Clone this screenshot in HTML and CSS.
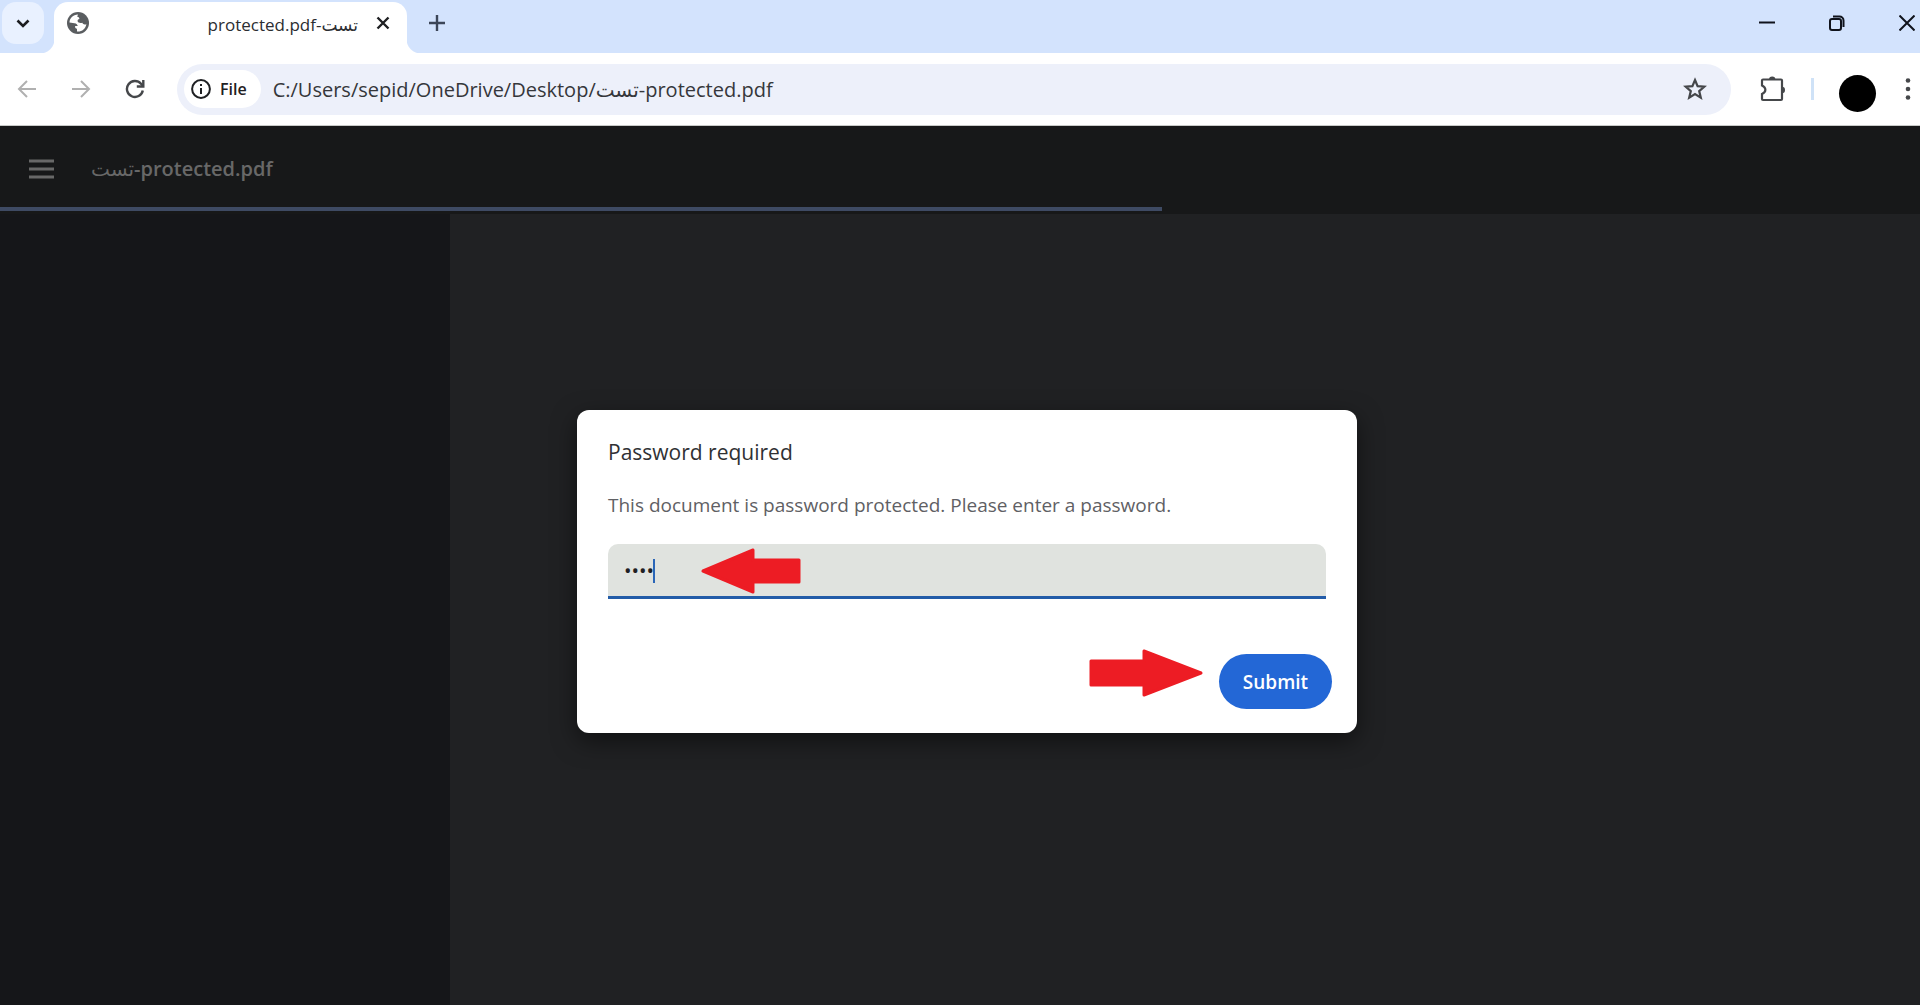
FILE: index.html
```html
<!DOCTYPE html>
<html lang="en">

<head>
  <meta charset="UTF-8">
  <meta name="viewport" content="width=device-width, initial-scale=1.0">
  <title>تست-protected.pdf</title>
  <link rel="stylesheet" href="styles.css">
</head>

<body>
  <!-- tab strip -->
  <div class="tabstrip">
    <button class="tab-search" aria-label="Search tabs">
      <svg width="16" height="16" viewBox="0 0 16 16"><path d="M2.500 5.500L8 11l5.500-5.500" fill="none" stroke="currentColor" stroke-width="2.600"/></svg>
    </button>
    <div class="tab">
      <svg class="globe" width="22" height="22" viewBox="0 0 22 22"><circle cx="11" cy="11" r="11" fill="currentColor"/><path d="M11 2.500C6 2.500 2.500 6.500 2.500 10.500l5 .8c2 .3 3 1.200 3.200 2.700H8.200c-.5 1.500.2 2.500 1.800 2.700v2.800c5 .4 8.500-2.800 9.400-7.300-1.900.6-3.400.3-4.100-1.400-1.800.5-4 .3-4.600-1.200-.5-1.500.5-2.300 1.700-2.500 0-1.500-.6-2.200-2.200-2.400z" fill="#fff"/></svg>
      <span class="tab-title" dir="rtl">تست-protected.pdf</span>
      <button class="tab-close" aria-label="Close tab">
        <svg width="14" height="14" viewBox="0 0 14 14"><path d="M1.500 1.500l11 11M12.500 1.500l-11 11" stroke="currentColor" stroke-width="2.400"/></svg>
      </button>
    </div>
    <button class="new-tab" aria-label="New tab">
      <svg width="16" height="16" viewBox="0 0 16 16"><path d="M8 0v16M0 8h16" stroke="currentColor" stroke-width="2.400"/></svg>
    </button>
    <div class="window-buttons">
      <button aria-label="Minimize"><svg width="16" height="16" viewBox="0 0 16 16"><path d="M0 7.500h16" stroke="currentColor" stroke-width="2"/></svg></button>
      <button aria-label="Restore"><svg width="16" height="16" viewBox="0 0 16 16" fill="none" stroke="currentColor" stroke-width="2"><rect x="1" y="4" width="11" height="11" rx="2"/><path d="M4 1.500h6.500a4 4 0 0 1 4 4V12"/></svg></button>
      <button aria-label="Close"><svg width="16" height="16" viewBox="0 0 16 16"><path d="M.5.5l15 15M15.500.5l-15 15" stroke="currentColor" stroke-width="2"/></svg></button>
    </div>
  </div>

  <!-- address bar -->
  <div class="toolbar">
    <div class="nav">
      <button disabled aria-label="Back"><svg width="20" height="20" viewBox="0 0 20 20" fill="none" stroke="currentColor" stroke-width="2"><path d="M19 10H2M10 2l-8 8 8 8"/></svg></button>
      <button disabled aria-label="Forward"><svg width="20" height="20" viewBox="0 0 20 20" fill="none" stroke="currentColor" stroke-width="2"><path d="M1 10h17M10 2l8 8-8 8"/></svg></button>
      <button aria-label="Reload"><svg width="20" height="20" viewBox="0 0 20 20" fill="none" stroke="currentColor" stroke-width="2.400"><path d="M17.800 11.500A8 8 0 1 1 16 4.700L18 7"/><path d="M18.300 1v6.500h-6.500"/></svg></button>
    </div>
    <div class="address">
      <button class="chip">
        <svg width="20" height="20" viewBox="0 0 20 20"><circle cx="10" cy="10" r="8.900" fill="none" stroke="currentColor" stroke-width="2"/><path d="M10 9v6M10 5v2" stroke="currentColor" stroke-width="2"/></svg>
        File
      </button>
      <input class="url" type="text" aria-label="Address" value="C:/Users/sepid/OneDrive/Desktop/تست-protected.pdf">
      <button class="star" aria-label="Bookmark"><svg width="24" height="24" viewBox="0 0 24 24"><path d="M12 3l2.600 6.200 6.700.5-5.100 4.400 1.600 6.600L12 17.100l-5.800 3.600 1.600-6.600-5.100-4.400 6.700-.5z" fill="none" stroke="currentColor" stroke-width="2.200"/></svg></button>
    </div>
    <button class="extensions" aria-label="Extensions"><svg width="26" height="26" viewBox="0 0 26 26"><path d="M3 3.500h18q1 0 1 1v18.500q0 1-1 1H3q-1 0-1-1v-5c4.500-2 4.500-6.500 0-8.500v-5q0-1 1-1z" fill="none" stroke="currentColor" stroke-width="2.200"/><path d="M9 3.500a3.200 3 0 0 1 6.400 0zM22 10.700a3 3.200 0 0 1 0 6.400z" fill="currentColor"/></svg></button>
    <span class="divider"></span>
    <button class="avatar" aria-label="Profile"></button>
    <button class="menu" aria-label="Menu"><svg width="6" height="24" viewBox="0 0 6 24" fill="currentColor"><circle cx="3" cy="3.500" r="2.300"/><circle cx="3" cy="12" r="2.300"/><circle cx="3" cy="20.500" r="2.300"/></svg></button>
  </div>

  <!-- pdf viewer -->
  <div class="viewer">
    <header class="viewer-header">
      <button aria-label="Toggle sidebar"><svg width="26" height="20" viewBox="0 0 26 20"><path d="M0 2h25M0 10h25M0 18h25" stroke="currentColor" stroke-width="2.800"/></svg></button>
      <h1><span>تست</span>-protected.pdf</h1>
      <div class="progress"></div>
    </header>
    <div class="viewer-body">
      <aside class="sidebar"></aside>
      <main class="pages"></main>
    </div>

    <div class="overlay">
      <form class="dialog">
        <h2>Password required</h2>
        <label for="password">This document is password protected. Please enter a password.</label>
        <div class="field">
          <input id="password" type="password" value="1234">
          <span class="caret"></span>
          <svg class="arrow-left" width="100" height="46" viewBox="0 0 100 46"><path d="M2 23L52 2v10h46v22H52v10z" fill="#ed1c24" stroke="#ed1c24" stroke-width="3" stroke-linejoin="round"/></svg>
        </div>
        <div class="actions">
          <svg width="114" height="48" viewBox="0 0 114 48"><path d="M112 24L55 2v10H2v24h53v10z" fill="#ed1c24" stroke="#ed1c24" stroke-width="3" stroke-linejoin="round"/></svg>
          <button class="submit" type="button">Submit</button>
        </div>
      </form>
    </div>
  </div>
</body>

</html>
```
FILE: styles.css
```css
* {
  box-sizing: border-box;
}

body {
  margin: 0;
  min-height: 100vh;
  display: flex;
  flex-direction: column;
  background: #fff;
  color: #2b2d31;
  font-family: "Open Sans", "DejaVu Sans", sans-serif;
}

button {
  display: flex;
  align-items: center;
  justify-content: center;
  padding: 0;
  border: 0;
  background: none;
  color: inherit;
  font-family: inherit;
}

svg {
  display: block;
  flex-shrink: 0;
}

/* tab strip */
.tabstrip {
  display: flex;
  height: 53px;
  background: #d3e3fd;
}

.tab-search {
  width: 42px;
  height: 42px;
  margin: 2px 10px 0 2px;
  border-radius: 14px;
  background: #e9f1ff;
  color: #1b1c20;
}

.tab {
  position: relative;
  display: flex;
  align-items: center;
  width: 353px;
  margin-top: 2px;
  padding: 0 17px 9px 13px;
  border-radius: 14px 14px 0 0;
  background: #fff;
}

/* flared feet of the active tab */
.tab::before,
.tab::after {
  content: "";
  position: absolute;
  bottom: 0;
  width: 14px;
  height: 14px;
}

.tab::before {
  right: 100%;
  background: radial-gradient(circle at 0 0, #d3e3fd 14px, #fff 15px);
}

.tab::after {
  left: 100%;
  background: radial-gradient(circle at 100% 0, #d3e3fd 14px, #fff 15px);
}

.globe {
  color: #5a5d60;
}

.tab-title {
  flex: 1;
  margin-right: 18px;
  padding-top: 4px;
  font-size: 17px;
  line-height: 24px;
  white-space: nowrap;
}

.tab-close {
  color: #1f2023;
}

.new-tab {
  width: 16px;
  height: 46px;
  margin-left: 22px;
  color: #3c4658;
}

.window-buttons {
  display: flex;
  gap: 54px;
  height: 46px;
  margin-left: auto;
  padding-right: 5px;
  color: #10131c;
}

/* address bar */
.toolbar {
  display: flex;
  align-items: center;
  height: 73px;
  padding: 0 9px 0 17px;
  border-bottom: 1px solid #c8cac8;
}

.nav {
  display: flex;
  gap: 34px;
  margin-right: 32px;
  color: #45474a;
}

.nav button:disabled {
  color: #b0b0b0;
}

.address {
  flex: 1;
  display: flex;
  align-items: center;
  height: 51px;
  padding: 0 24px 0 7px;
  border-radius: 26px;
  background: #edf0fa;
}

.chip {
  gap: 9px;
  height: 38px;
  padding: 0 14px 0 7px;
  border-radius: 19px;
  background: #fff;
  color: #1f2023;
  font-size: 16px;
  font-weight: 600;
}

.url {
  flex: 1;
  padding: 0 0 0 12px;
  border: 0;
  outline: 0;
  background: none;
  color: #35373b;
  font-family: inherit;
  font-size: 20px;
}

.star,
.extensions,
.menu {
  color: #45474a;
}

.extensions {
  margin-left: 29px;
}

.divider {
  width: 3px;
  height: 22px;
  margin: 0 25px;
  background: #cfe2f7;
}

.avatar {
  width: 37px;
  height: 37px;
  margin: 8px 29px 0 0;
  border-radius: 50%;
  background: #000;
}

/* pdf viewer */
.viewer {
  position: relative;
  flex: 1;
  display: flex;
  flex-direction: column;
  background: #202123;
}

.viewer-header {
  position: relative;
  display: flex;
  align-items: center;
  gap: 36px;
  height: 88px;
  padding: 0 29px 3px;
  background: #171819;
  color: #686868;
}

.viewer-header h1 {
  margin: 0;
  font-size: 20px;
  font-weight: 600;
}

.viewer-header h1 span {
  font-weight: 400;
}

.progress {
  position: absolute;
  left: 0;
  bottom: 3px;
  width: 60.5%;
  height: 4px;
  background: #3e4a63;
}

.viewer-body {
  flex: 1;
  display: flex;
}

.sidebar {
  width: 450px;
  background: #151619;
}

.pages {
  flex: 1;
}

/* password dialog */
.overlay {
  position: absolute;
  inset: 0;
  display: flex;
  align-items: center;
  justify-content: center;
  padding: 12px 0 0 14px;
}

.dialog {
  width: 780px;
  padding: 27px 31px 24px;
  border-radius: 12px;
  background: #fff;
  box-shadow: 0 8px 24px rgba(0, 0, 0, .5);
}

.dialog h2 {
  margin: 0;
  color: #303134;
  font-size: 21px;
  font-weight: 400;
  line-height: 30px;
}

.dialog label {
  display: block;
  margin: 24px 0 25px;
  color: #5f6064;
  font-size: 19px;
  line-height: 28px;
}

.field {
  position: relative;
}

.field input {
  display: block;
  width: 100%;
  height: 55px;
  padding: 0 16px;
  border: 0;
  border-bottom: 3px solid #235ca8;
  border-radius: 10px 10px 0 0;
  outline: 0;
  background: #e0e3df;
  color: #1f2023;
  font-family: inherit;
  font-size: 20px;
}

.caret {
  position: absolute;
  top: 15px;
  left: 45px;
  width: 2px;
  height: 24px;
  background: #2a66b8;
}

.arrow-left {
  position: absolute;
  top: 4px;
  left: 93px;
}

.actions {
  display: flex;
  justify-content: flex-end;
  gap: 16px;
  margin: 55px -6px 0 0;
}

.actions svg {
  margin-top: -5px;
}

.submit {
  width: 113px;
  height: 55px;
  border-radius: 28px;
  background: #2367d6;
  color: #fff;
  font-size: 19px;
  font-weight: 600;
}
```
